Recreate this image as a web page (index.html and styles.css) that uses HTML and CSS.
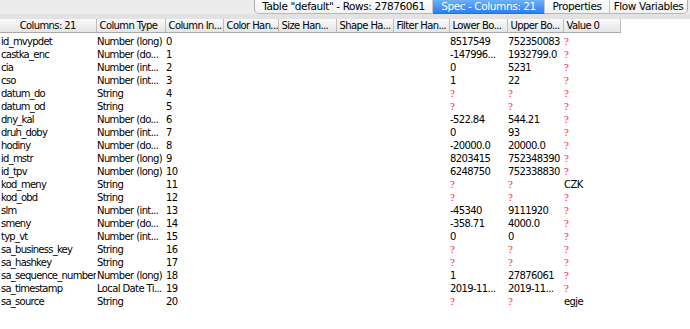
FILE: index.html
```html
<!DOCTYPE html>
<html lang="en">
<head>
    <meta charset="UTF-8">
    <title>Spec - Columns: 21</title>
    <link rel="stylesheet" href="styles.css">
</head>
<body>
    <div class="tabbar">
        <div class="tab tab-table">Table "default" - Rows: 27876061</div>
        <div class="tab tab-spec active">Spec - Columns: 21</div>
        <div class="tab tab-props">Properties</div>
        <div class="tab tab-flow">Flow Variables</div>
    </div>
    <div class="strip"></div>

    <table class="spec">
        <colgroup>
            <col class="c-name"><col class="c-type"><col class="c-idx"><col class="c-color">
            <col class="c-size"><col class="c-shape"><col class="c-filter"><col class="c-lower">
            <col class="c-upper"><col class="c-value"><col class="c-rest">
        </colgroup>
        <thead>
            <tr>
                <th class="center">Columns: 21</th>
                <th>Column Type</th>
                <th>Column In...</th>
                <th>Color Han...</th>
                <th>Size Han...</th>
                <th>Shape Ha...</th>
                <th>Filter Han...</th>
                <th>Lower Bo...</th>
                <th>Upper Bo...</th>
                <th>Value 0</th>
                <th class="rest"></th>
            </tr>
        </thead>
        <tbody>
            <tr class="first"><td>id_mvypdet</td><td>Number (long)</td><td>0</td><td></td><td></td><td></td><td></td><td>8517549</td><td>752350083</td><td><span class="q">?</span></td><td></td></tr>
            <tr><td>castka_enc</td><td>Number (do...</td><td>1</td><td></td><td></td><td></td><td></td><td>-147996...</td><td>1932799.0</td><td><span class="q">?</span></td><td></td></tr>
            <tr><td>cia</td><td>Number (int...</td><td>2</td><td></td><td></td><td></td><td></td><td>0</td><td>5231</td><td><span class="q">?</span></td><td></td></tr>
            <tr><td>cso</td><td>Number (int...</td><td>3</td><td></td><td></td><td></td><td></td><td>1</td><td>22</td><td><span class="q">?</span></td><td></td></tr>
            <tr><td>datum_do</td><td>String</td><td>4</td><td></td><td></td><td></td><td></td><td><span class="q">?</span></td><td><span class="q">?</span></td><td><span class="q">?</span></td><td></td></tr>
            <tr><td>datum_od</td><td>String</td><td>5</td><td></td><td></td><td></td><td></td><td><span class="q">?</span></td><td><span class="q">?</span></td><td><span class="q">?</span></td><td></td></tr>
            <tr><td>dny_kal</td><td>Number (do...</td><td>6</td><td></td><td></td><td></td><td></td><td>-522.84</td><td>544.21</td><td><span class="q">?</span></td><td></td></tr>
            <tr><td>druh_doby</td><td>Number (int...</td><td>7</td><td></td><td></td><td></td><td></td><td>0</td><td>93</td><td><span class="q">?</span></td><td></td></tr>
            <tr><td>hodiny</td><td>Number (do...</td><td>8</td><td></td><td></td><td></td><td></td><td>-20000.0</td><td>20000.0</td><td><span class="q">?</span></td><td></td></tr>
            <tr><td>id_mstr</td><td>Number (long)</td><td>9</td><td></td><td></td><td></td><td></td><td>8203415</td><td>752348390</td><td><span class="q">?</span></td><td></td></tr>
            <tr><td>id_tpv</td><td>Number (long)</td><td>10</td><td></td><td></td><td></td><td></td><td>6248750</td><td>752338830</td><td><span class="q">?</span></td><td></td></tr>
            <tr><td>kod_meny</td><td>String</td><td>11</td><td></td><td></td><td></td><td></td><td><span class="q">?</span></td><td><span class="q">?</span></td><td>CZK</td><td></td></tr>
            <tr><td>kod_obd</td><td>String</td><td>12</td><td></td><td></td><td></td><td></td><td><span class="q">?</span></td><td><span class="q">?</span></td><td><span class="q">?</span></td><td></td></tr>
            <tr><td>slm</td><td>Number (int...</td><td>13</td><td></td><td></td><td></td><td></td><td>-45340</td><td>9111920</td><td><span class="q">?</span></td><td></td></tr>
            <tr><td>smeny</td><td>Number (do...</td><td>14</td><td></td><td></td><td></td><td></td><td>-358.71</td><td>4000.0</td><td><span class="q">?</span></td><td></td></tr>
            <tr><td>typ_vt</td><td>Number (int...</td><td>15</td><td></td><td></td><td></td><td></td><td>0</td><td>0</td><td><span class="q">?</span></td><td></td></tr>
            <tr><td>sa_business_key</td><td>String</td><td>16</td><td></td><td></td><td></td><td></td><td><span class="q">?</span></td><td><span class="q">?</span></td><td><span class="q">?</span></td><td></td></tr>
            <tr><td>sa_hashkey</td><td>String</td><td>17</td><td></td><td></td><td></td><td></td><td><span class="q">?</span></td><td><span class="q">?</span></td><td><span class="q">?</span></td><td></td></tr>
            <tr><td>sa_sequence_number</td><td>Number (long)</td><td>18</td><td></td><td></td><td></td><td></td><td>1</td><td>27876061</td><td><span class="q">?</span></td><td></td></tr>
            <tr><td>sa_timestamp</td><td>Local Date Ti...</td><td>19</td><td></td><td></td><td></td><td></td><td>2019-11...</td><td>2019-11...</td><td><span class="q">?</span></td><td></td></tr>
            <tr><td>sa_source</td><td>String</td><td>20</td><td></td><td></td><td></td><td></td><td><span class="q">?</span></td><td><span class="q">?</span></td><td>egje</td><td></td></tr>
        </tbody>
    </table>
</body>
</html>
```

FILE: styles.css
```css
body {
    margin: 0;
    background: #fff;
    font-family: "DejaVu Sans", sans-serif;
    font-size: 10px;
    letter-spacing: -0.6px;
    color: #000;
}
.tabbar {
    height: 14px;
    background: #ececec;
    display: flex;
    justify-content: flex-end;
    padding-right: 2px;
}
.tab {
    height: 13px;
    line-height: 13px;
    font-size: 10.5px;
    letter-spacing: -0.4px;
    text-align: center;
    background: linear-gradient(#ffffff, #f1f1f1);
    border-bottom: 1px solid #b8b8b8;
    border-right: 1px solid #c8c8c8;
    white-space: nowrap;
    overflow: hidden;
}
.tab-table { width: 177px; border-left: 1px solid #b0b0b0; border-bottom-left-radius: 5px; }
.tab-spec { width: 111px; }
.tab-props { width: 64px; }
.tab-flow { width: 77px; border-right: 1px solid #b0b0b0; border-bottom-right-radius: 5px; }
.tab.active {
    background: linear-gradient(#6cb0fb, #2d7ff0);
    color: #fff;
    border-bottom-color: #2a6fd6;
}
.strip {
    height: 5px;
    background: #e2e2e2;
}
.spec {
    border-collapse: collapse;
    table-layout: fixed;
    width: 690px;
}
.c-name { width: 96px; }
.c-type { width: 69px; }
.c-idx { width: 58px; }
.c-color { width: 55px; }
.c-size { width: 58px; }
.c-shape { width: 57px; }
.c-filter { width: 56px; }
.c-lower { width: 58px; }
.c-upper { width: 56px; }
.c-value { width: 57px; }
.spec th {
    height: 13px;
    padding: 0 0 0 3px;
    font-weight: normal;
    text-align: left;
    background: linear-gradient(#fafafa, #e4e4e4);
    border-right: 1px solid #bdbdbd;
    border-bottom: 1px solid #a8a8a8;
    white-space: nowrap;
    overflow: hidden;
    line-height: 13px;
}
.spec th.center { text-align: center; padding: 0; }
.spec th.rest { background: #fff; border: none; }
.spec td {
    height: 13px;
    padding: 0 0 0 1px;
    line-height: 13px;
    white-space: nowrap;
    overflow: hidden;
}
.spec td:first-child { letter-spacing: -0.75px; }
.spec tr.first td { padding-top: 2px; }
.q {
    color: #ff1a1a;
    font-family: "Liberation Serif", serif;
    font-size: 11px;
    letter-spacing: 0;
}
```
